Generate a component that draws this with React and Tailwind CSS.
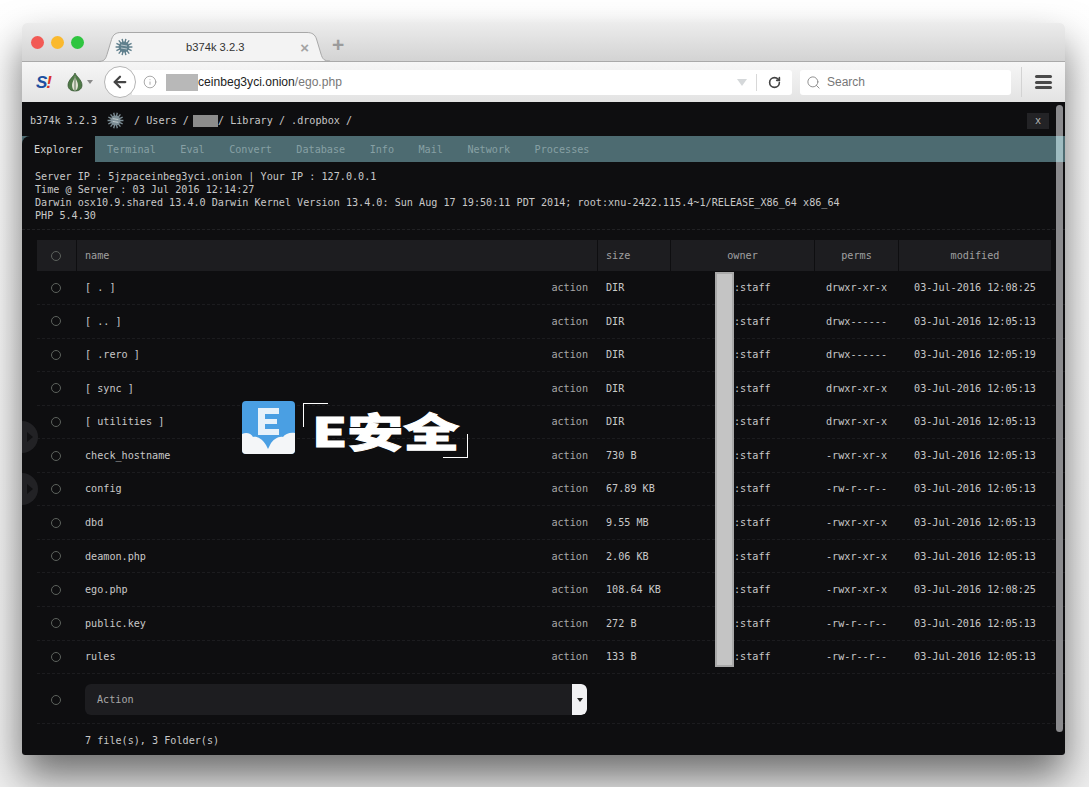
import { ArrowLeft, Info, RotateCw, Search } from 'lucide-react';

const mono = 'font-["DejaVu_Sans_Mono","Liberation_Mono",monospace] text-[10.14px]';

const files = [
  ['[ . ]', 'DIR', 'drwxr-xr-x', '03-Jul-2016 12:08:25'],
  ['[ .. ]', 'DIR', 'drwx------', '03-Jul-2016 12:05:13'],
  ['[ .rero ]', 'DIR', 'drwx------', '03-Jul-2016 12:05:19'],
  ['[ sync ]', 'DIR', 'drwxr-xr-x', '03-Jul-2016 12:05:13'],
  ['[ utilities ]', 'DIR', 'drwxr-xr-x', '03-Jul-2016 12:05:13'],
  ['check_hostname', '730 B', '-rwxr-xr-x', '03-Jul-2016 12:05:13'],
  ['config', '67.89 KB', '-rw-r--r--', '03-Jul-2016 12:05:13'],
  ['dbd', '9.55 MB', '-rwxr-xr-x', '03-Jul-2016 12:05:13'],
  ['deamon.php', '2.06 KB', '-rwxr-xr-x', '03-Jul-2016 12:05:13'],
  ['ego.php', '108.64 KB', '-rwxr-xr-x', '03-Jul-2016 12:08:25'],
  ['public.key', '272 B', '-rw-r--r--', '03-Jul-2016 12:05:13'],
  ['rules', '133 B', '-rw-r--r--', '03-Jul-2016 12:05:13'],
];

const tabs = ['Terminal', 'Eval', 'Convert', 'Database', 'Info', 'Mail', 'Network', 'Processes'];

const cols = 'grid grid-cols-[39px_520px_72px_143px_83px_152px] gap-x-px';

const Bug = ({ size = 18, color = '#5f7f8c' }) => {
  const spikes = [];
  for (let i = 0; i < 14; i++) {
    const a = (i / 14) * Math.PI * 2;
    spikes.push(
      <line
        key={i}
        x1={9 + Math.cos(a) * 4}
        y1={9 + Math.sin(a) * 4}
        x2={9 + Math.cos(a) * 8.4}
        y2={9 + Math.sin(a) * 8.4}
        stroke={color}
        strokeWidth="1.4"
      />
    );
  }
  return (
    <svg width={size} height={size} viewBox="0 0 18 18">
      {spikes}
      <circle cx="9" cy="9" r="5.4" fill={color} />
      <path d="M6 7l6 1M6 10l6 1" stroke="#dfe6e8" strokeWidth="0.7" />
    </svg>
  );
};

const Radio = () => <span className="block h-[10px] w-[10px] rounded-full border border-[#5d625d]" />;

const TabShape = () => (
  <svg className="absolute inset-0" width="232" height="30" viewBox="0 0 232 30">
    <path
      d="M0 29.5c6 0 7.500-2 9-7l4.500-15C15 2.500 18 .5 23 .5h186c5 0 8 2 9.500 6.500l4.500 15c1.500 5 3 7 9 7"
      fill="#f3f3f3"
      stroke="#a8a8a8"
    />
  </svg>
);

const SideArrow = ({ className }) => (
  <div className={`absolute -left-[16px] flex h-[32px] w-[32px] items-center justify-end rounded-full bg-[#222225] pr-[5px] ${className}`}>
    <span className="h-0 w-0 border-y-[5px] border-l-[6px] border-y-transparent border-l-[#111113]" />
  </div>
);

export default function App() {
  return (
    <div className="h-[787px] w-[1089px] overflow-hidden bg-gradient-to-b from-white to-[#f0f0f0] pl-[22px] pt-[23px]">
      <div className="relative flex h-[732px] w-[1043px] flex-col overflow-hidden rounded-t-[5px] rounded-b-[3px] shadow-[0_22px_40px_rgba(0,0,0,0.55)]">
        {/* tab strip */}
        <div className="flex h-[39px] items-end border-b border-[#a9a9a9] bg-gradient-to-b from-[#ececec] to-[#d3d3d3] pl-[9px]">
          <div className="flex h-[38px] items-center gap-[7px] self-start">
            <span className="h-[13px] w-[13px] rounded-full bg-[#f25a55]" />
            <span className="h-[13px] w-[13px] rounded-full bg-[#fab92e]" />
            <span className="h-[13px] w-[13px] rounded-full bg-[#2fc540]" />
          </div>
          <div className="relative -mb-px ml-[14px] h-[30px] w-[232px] shrink-0">
            <TabShape />
            <div className="relative flex h-full items-center pl-[17px] pr-[21px] font-['Liberation_Sans',sans-serif] text-[11.2px] text-[#333]">
              <Bug />
              <span className="ml-[53px]">b374k 3.2.3</span>
              <span className="ml-auto text-[15px] font-bold leading-none text-[#a3a3a3]">×</span>
            </div>
          </div>
          <span className="ml-[2px] mb-[3px] font-['Liberation_Sans',sans-serif] text-[21px] font-bold leading-[26px] text-[#9b9b9b]">+</span>
        </div>

        {/* toolbar */}
        <div className="flex h-[40px] items-center bg-gradient-to-b from-[#f6f6f6] to-[#e3e3e3] font-['Liberation_Sans',sans-serif]">
          <span className="ml-[14px] w-[17px] text-[17px] font-bold italic leading-none tracking-[-1px] text-[#1c4fa0]">
            S<span className="text-[#d8322a]">!</span>
          </span>
          <svg className="ml-[13px]" width="18" height="20" viewBox="0 0 18 20">
            <path d="M9 1c1 3 7 7 7 12 0 4-3 6-7 6s-7-2-7-6c0-5 6-9 7-12z" fill="#4f7a48" stroke="#33502f" strokeWidth=".7" />
            <path d="M9 4c-1 4-3 6-3 9s1 5 3 6c2-1 3-3 3-6s-2-5-3-9z" fill="#dfe3d4" />
            <path d="M9 5v14" stroke="#33502f" strokeWidth=".8" />
          </svg>
          <span className="ml-[3px] h-0 w-0 border-x-[3.5px] border-t-[4px] border-x-transparent border-t-[#8a8a8a]" />
          <div className="z-10 ml-[11px] flex h-[32px] w-[32px] items-center justify-center rounded-full border border-[#b5b5b5] bg-white">
            <ArrowLeft size={18} strokeWidth={3} className="text-[#444]" />
          </div>
          <div className="-ml-[4px] flex h-[25px] w-[660px] items-center rounded-r-[3px] bg-white pl-[11px] text-[12.1px]">
            <Info size={14} strokeWidth={1.3} className="text-[#8f8f8f]" />
            <span className="ml-[9px] h-[17px] w-[32px] bg-[#b8b8b8]" />
            <span className="text-[#222]">ceinbeg3yci.onion</span>
            <span className="text-[#777]">/ego.php</span>
            <span className="ml-auto h-0 w-0 border-x-[5px] border-t-[7px] border-x-transparent border-t-[#d5d8da]" />
            <span className="ml-[9px] h-[17px] w-px bg-[#d8d8d8]" />
            <RotateCw size={13} strokeWidth={3} className="mx-[11px] text-[#444]" />
          </div>
          <div className="ml-[8px] flex h-[25px] w-[211px] items-center rounded-[3px] bg-white pl-[6px] text-[12px] text-[#777]">
            <Search size={15} strokeWidth={1.5} className="text-[#8a8a8a]" />
            <span className="ml-[6px]">Search</span>
          </div>
          <div className="ml-[10px] h-[30px] w-px bg-[#d3d3d3]" />
          <div className="ml-[13px] flex w-[17px] flex-col gap-[2.500px]">
            <span className="h-[3px] rounded-sm bg-[#4a4a4a]" />
            <span className="h-[3px] rounded-sm bg-[#4a4a4a]" />
            <span className="h-[3px] rounded-sm bg-[#4a4a4a]" />
          </div>
        </div>

        {/* page */}
        <div className={`relative flex-1 bg-[#0e0e10] text-[#c8c8c8] ${mono}`}>
          <div className="flex h-[34px] items-center pl-[8px] pr-[16px] pt-[3px]">
            <span>b374k 3.2.3</span>
            <span className="ml-[10px]"><Bug size={17} color="#7d8e96" /></span>
            <span className="ml-[10px]">/ Users /</span>
            <span className="ml-[4px] h-[12px] w-[25px] bg-[#8c8c8c]" />
            <span>/ Library / .dropbox /</span>
            <span className="ml-auto flex h-[16px] w-[22px] items-center justify-center bg-[#232326] text-[#b5b5b5]">x</span>
          </div>

          <div className="flex h-[26px] items-stretch bg-[#4d6b71]">
            <div className="flex w-[73px] items-center justify-center rounded-tl-[8px] bg-[#0e0e10] pt-px text-[#d4d4d4]">Explorer</div>
            <div className="flex items-center gap-[24.500px] pl-[12px] pt-px text-[#87a0a4]">
              {tabs.map((t) => (
                <span key={t}>{t}</span>
              ))}
            </div>
          </div>

          <div className="h-[68px] border-b border-dashed border-[#212124] pl-[13px] pt-[8px] leading-[13px]">
            <div>Server IP : 5jzpaceinbeg3yci.onion | Your IP : 127.0.0.1</div>
            <div>Time @ Server : 03 Jul 2016 12:14:27</div>
            <div>Darwin osx10.9.shared 13.4.0 Darwin Kernel Version 13.4.0: Sun Aug 17 19:50:11 PDT 2014; root:xnu-2422.115.4~1/RELEASE_X86_64 x86_64</div>
            <div>PHP 5.4.30</div>
          </div>

          <div className="pl-[15px] pt-[10px]">
            <div className={`${cols} h-[31px] text-[#a0a0a0]`}>
              <div className="flex items-center justify-center bg-[#1d1d20] pr-px"><Radio /></div>
              <div className="flex items-center bg-[#1d1d20] pl-[8px]">name</div>
              <div className="flex items-center bg-[#1d1d20] pl-[8px]">size</div>
              <div className="flex items-center justify-center bg-[#1d1d20]">owner</div>
              <div className="flex items-center justify-center bg-[#1d1d20]">perms</div>
              <div className="flex items-center justify-center bg-[#1d1d20]">modified</div>
            </div>

            <div className="pt-[0.500px]">
              {files.map(([name, size, perms, date]) => (
                <div key={name} className={`${cols} h-[33.55px] items-center border-b border-dashed border-[#1c1c1f]`}>
                  <div className="flex justify-center pr-px"><Radio /></div>
                  <div className="flex justify-between pl-[8px] pr-[9px]">
                    <span>{name}</span>
                    <span className="text-[#a8a8a8]">action</span>
                  </div>
                  <div className="pl-[8px]">{size}</div>
                  <div className="pl-[63px]">:staff</div>
                  <div className="text-center">{perms}</div>
                  <div className="text-center">{date}</div>
                </div>
              ))}
            </div>

            <div className={`${cols} h-[50px] items-center border-b border-dashed border-[#1c1c1f] pt-[2px]`}>
              <div className="flex justify-center pr-px"><Radio /></div>
              <div className="pl-[8px]">
                <div className="flex h-[31px] w-[502px] items-center justify-between overflow-hidden rounded-[6px] bg-[#1d1d20] pl-[12px] text-[#a8a8a8]">
                  <span>Action</span>
                  <span className="flex h-full w-[15px] items-center justify-center rounded-r-[5px] bg-[#f1f1f3]">
                    <span className="h-0 w-0 border-x-[3px] border-t-[4px] border-x-transparent border-t-[#222]" />
                  </span>
                </div>
              </div>
            </div>

            <div className="pl-[48px] pt-[9px]">7 file(s), 3 Folder(s)</div>
          </div>

          {/* redaction bar over the owner column */}
          <div className="absolute left-[693px] top-[170px] h-[395px] w-[19px] border-2 border-[#a9a9a9] bg-[#c4c4c4]" />

          {/* page scrollbar */}
          <div className="absolute right-[2px] top-[3px] h-[627px] w-[7px] rounded-full bg-[#8b8b8e]" />
          <div className="absolute right-[2px] top-[34px] h-[26px] w-[7px] bg-[#9fbcc1]" />

          <SideArrow className="top-[319px]" />
          <SideArrow className="top-[371px]" />

          {/* watermark */}
          <div className="absolute left-[220px] top-[299px] flex items-start">
            <svg className="rounded-[4px]" width="53" height="53" viewBox="0 0 53 53">
              <rect width="53" height="53" fill="#4a9fe3" />
              <path d="M16 7h21v6H23v5h12v5H23v5h14v6H16z" fill="#e6f1fa" />
              <path d="M0 33c4-2 9-1 11 3 3-1 9 1 13 8l2 4 2-4c3-6 9-9 13-8 2-3 7-5 12-4v21H0z" fill="#f4f6f8" />
            </svg>
            <div className="relative ml-[8px] h-[57px] w-[165px]">
              <span className="absolute left-0 top-[2px] h-[24px] w-[25px] border-l border-t border-white" />
              <span className="absolute bottom-0 right-0 h-[24px] w-[25px] border-b border-r border-white" />
              <span className="absolute left-[9px] top-[1px] origin-left scale-x-[1.4] whitespace-nowrap font-['Noto_Sans_CJK_SC',sans-serif] text-[40px] font-black leading-[56px] text-white [-webkit-text-stroke:1px_white]">
                E安全
              </span>
            </div>
          </div>
        </div>
      </div>
    </div>
  );
}
